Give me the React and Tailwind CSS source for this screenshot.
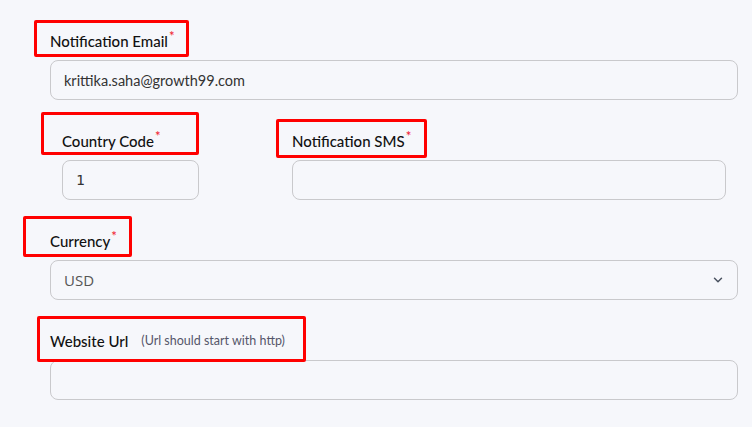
import { ChevronDown } from 'lucide-react';

function Star() {
  return <span className="ml-[1px] self-start text-[13px] leading-[9px] text-[#f0142c]">*</span>;
}

// red annotation outline drawn over a label
function Mark({ className }) {
  return <span className={`pointer-events-none absolute rounded-[2px] border-[3px] border-[#ff0000] ${className}`} />;
}

function Label({ mark, children }) {
  return (
    <label className="relative flex h-[18px] items-start self-start text-[15px] font-medium leading-[18px] text-[#111]">
      <Mark className={mark} />
      {children}
    </label>
  );
}

const inputCls = 'block h-[40px] w-full rounded-[8px] border border-[#c9c9cc] bg-[#f6f7fb] px-[13px] text-[14.5px] text-[#333] outline-none';

export default function App() {
  return (
    <div className="flex min-h-[427px] w-[752px] flex-col gap-[32px] bg-[#f6f7fb] pl-[50px] pr-[14px] pt-[32px] font-['Lato',sans-serif]">
      {/* Notification Email */}
      <div className="flex flex-col gap-[10px]">
        <Label mark="-left-[16px] -top-[12px] h-[37px] w-[155px]">
          Notification Email<Star />
        </Label>
        <input className={inputCls} defaultValue="krittika.saha@growth99.com" />
      </div>

      {/* Country code + SMS */}
      <div className="flex gap-[93px] pl-[12px]">
        <div className="flex w-[137px] flex-col gap-[10px]">
          <Label mark="-left-[21px] -top-[20px] h-[43px] w-[158px]">
            Country Code<Star />
          </Label>
          <input className={`${inputCls} px-[12px] font-['DejaVu_Sans_Mono',monospace] text-[10.5px]`} defaultValue="1" />
        </div>
        <div className="flex w-[434px] flex-col gap-[10px]">
          <Label mark="-left-[16px] -top-[13px] h-[39px] w-[151px]">
            Notification SMS<Star />
          </Label>
          <input className={inputCls} />
        </div>
      </div>

      {/* Currency */}
      <div className="flex flex-col gap-[10px]">
        <Label mark="-left-[27px] -top-[16px] h-[41px] w-[109px]">
          Currency<Star />
        </Label>
        <div className="relative">
          <select className={`${inputCls} appearance-none px-[9px] font-['Open_Sans',sans-serif] text-[15px] text-[#555]`} defaultValue="USD">
            <option>USD</option>
          </select>
          <ChevronDown size={14} strokeWidth={2.5} className="absolute right-[13px] top-[13px] text-[#4a5260]" />
        </div>
      </div>

      {/* Website Url */}
      <div className="flex flex-col gap-[10px]">
        <Label mark="-left-[13px] -top-[16px] h-[46px] w-[269px]">
          Website Url
          <span className="ml-[13px] self-end text-[12.5px] font-normal leading-[18px] text-[#55566a]">(Url should start with http)</span>
        </Label>
        <input className={inputCls} />
      </div>
    </div>
  );
}
